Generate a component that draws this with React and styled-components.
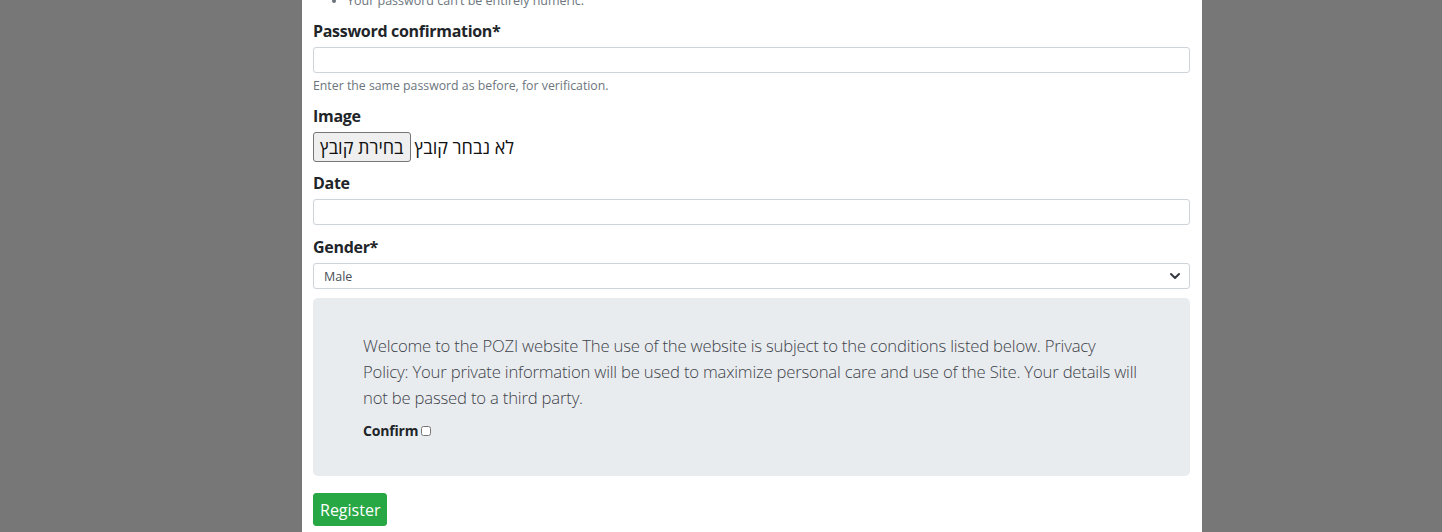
import React from "react";
import styled, { createGlobalStyle } from "styled-components";

const Global = createGlobalStyle`
  html, body { margin: 0; padding: 0; }
  body {
    background: #777777;
    font-family: "Open Sans", "Noto Sans", "Liberation Sans", sans-serif;
    color: #212529;
    overflow: hidden;
  }
`;

const Page = styled.div`
  display: flex;
  padding-left: 302px;
  height: 532px;
  overflow: hidden;
`;

const Column = styled.main`
  width: 900px;
  background: #ffffff;
  padding: 0 12px 0 11px;
  box-sizing: border-box;
`;

const Form = styled.form`
  display: flex;
  flex-direction: column;
  margin-top: -9px;
`;

const HintList = styled.ul`
  margin: 0 0 8px;
  padding-left: 34px;
  font-size: 12.5px;
  line-height: 20px;
  color: #6c757d;
`;

const Group = styled.div`
  display: flex;
  flex-direction: column;
  margin-bottom: ${(p) => p.$gap ?? 10}px;
`;

const Label = styled.label`
  font-size: 16px;
  font-weight: 700;
  line-height: 24px;
  margin-bottom: 4px;
  letter-spacing: -0.3px;
`;

const TextInput = styled.input`
  height: 26px;
  box-sizing: border-box;
  border: 1px solid #ced4da;
  border-radius: 3px;
  padding: 0 10px;
  font: inherit;
  background: #fff;
  width: 100%;
`;

const Help = styled.small`
  display: block;
  margin-top: 3px;
  font-size: 12.3px;
  line-height: 19px;
  color: #6c757d;
`;

const FileRow = styled.div`
  display: flex;
  align-items: center;
  gap: 4px;
  height: 30px;
`;

const FileButton = styled.button`
  height: 30px;
  padding: 0 6px;
  background: #efefef;
  border: 1px solid #767676;
  border-radius: 3px;
  font-family: "Noto Sans", "Open Sans", sans-serif;
  font-size: 18px;
  color: #111;
  direction: rtl;
`;

const FileStatus = styled.span`
  font-family: "Noto Sans", "Open Sans", sans-serif;
  font-size: 18px;
  color: #111;
  direction: rtl;
`;

const SelectBox = styled.div`
  position: relative;
  height: 26px;
  box-sizing: border-box;
  border: 1px solid #ced4da;
  border-radius: 3px;
  display: flex;
  align-items: center;
  padding: 0 10px;
  font-size: 12.5px;
  color: #495057;
`;

const Chevron = styled.svg`
  position: absolute;
  right: 8px;
  top: 50%;
  transform: translateY(-50%);
`;

const Notice = styled.section`
  background: #e9ecef;
  border-radius: 5px;
  padding: 35px 50px 36px 50px;
  margin-bottom: 17px;
`;

const Lead = styled.p`
  margin: 0 0 9px;
  font-size: 16.7px;
  font-weight: 300;
  line-height: 26px;
  color: #3d434a;
  letter-spacing: -0.2px;
`;

const ConfirmRow = styled.label`
  display: flex;
  align-items: center;
  height: 20px;
  font-size: 14px;
  font-weight: 700;
  letter-spacing: -0.2px;
`;

const Check = styled.input`
  width: 10px;
  height: 10px;
  margin: 1px 0 0 3px;
`;

const Submit = styled.button`
  align-self: flex-start;
  height: 33px;
  padding: 0 6px;
  background: #28a745;
  border: 1px solid #28a745;
  border-radius: 3px;
  color: #fff;
  font-family: "Open Sans", "Noto Sans", sans-serif;
  font-size: 16px;
`;

export default function App() {
  return (
    <>
      <Global />
      <Page>
        <Column>
          <Form onSubmit={(e) => e.preventDefault()}>
            <HintList>
              <li>Your password can’t be entirely numeric.</li>
            </HintList>
            <Group $gap={9}>
              <Label>Password confirmation*</Label>
              <TextInput type="password" />
              <Help>Enter the same password as before, for verification.</Help>
            </Group>
            <Group $gap={9}>
              <Label>Image</Label>
              <FileRow>
                <FileButton type="button">בחירת קובץ</FileButton>
                <FileStatus>לא נבחר קובץ</FileStatus>
              </FileRow>
            </Group>
            <Group>
              <Label>Date</Label>
              <TextInput type="text" />
            </Group>
            <Group $gap={9}>
              <Label>Gender*</Label>
              <SelectBox>
                Male
                <Chevron width="12" height="10" viewBox="0 0 12 10">
                  <path d="M2 3 L6 7 L10 3" fill="none" stroke="#343a40" strokeWidth="2" strokeLinecap="round" strokeLinejoin="round" />
                </Chevron>
              </SelectBox>
            </Group>
            <Notice>
              <Lead>
                Welcome to the POZI website The use of the website is subject to the conditions listed below. Privacy Policy: Your private information will be used to maximize personal care and use of the Site. Your details will not be passed to a third party.
              </Lead>
              <ConfirmRow>
                Confirm
                <Check type="checkbox" />
              </ConfirmRow>
            </Notice>
            <Submit type="submit">Register</Submit>
          </Form>
        </Column>
      </Page>
    </>
  );
}
